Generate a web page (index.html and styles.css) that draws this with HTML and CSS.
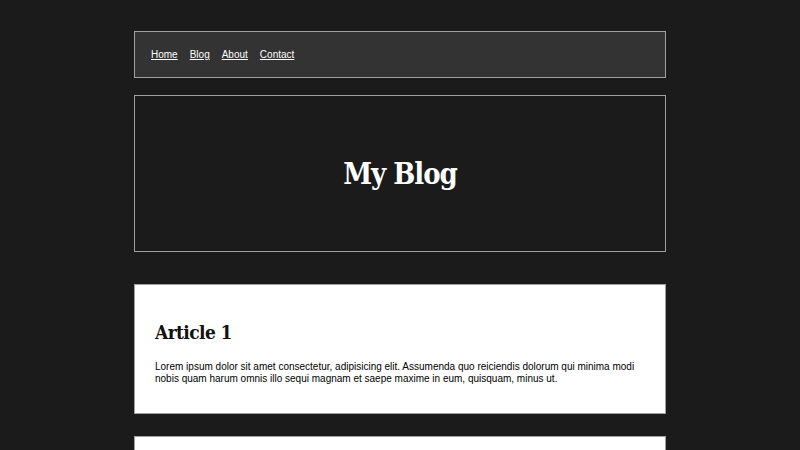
FILE: index.html
```html
<!DOCTYPE html>
<html>
<head>
<meta charset="utf-8">
<link rel="stylesheet" href="styles.css">
</head>
<body>
<div class="page">
  <nav class="nav">
    <a href="#">Home</a>
    <a href="#">Blog</a>
    <a href="#">About</a>
    <a href="#">Contact</a>
  </nav>
  <header class="hero">
    <h1>My Blog</h1>
  </header>
  <main class="articles">
    <article class="card">
      <h2>Article 1</h2>
      <p>Lorem ipsum dolor sit amet consectetur, adipisicing elit. Assumenda quo reiciendis dolorum qui minima modi nobis quam harum omnis illo sequi magnam et saepe maxime in eum, quisquam, minus ut.</p>
    </article>
    <article class="card">
      <h2>Article 2</h2>
      <p>Lorem ipsum dolor sit amet consectetur, adipisicing elit. Assumenda quo reiciendis dolorum qui minima modi nobis quam harum omnis illo sequi magnam et saepe maxime in eum, quisquam, minus ut.</p>
    </article>
  </main>
</div>
</body>
</html>
```
FILE: styles.css
```css
html, body {
  margin: 0;
  padding: 0;
  background: #1b1b1b;
  font-family: "Liberation Sans", Arial, sans-serif;
  font-size: 10px;
}
.page {
  width: 532px;
  margin: 0 auto;
  padding-top: 31px;
  display: flex;
  flex-direction: column;
}
.nav {
  box-sizing: border-box;
  height: 47px;
  background: #333333;
  border: 1px solid #a0a0a0;
  display: flex;
  align-items: center;
  gap: 12px;
  padding: 0 16px 0 16px;
  font-size: 10px;
}
.nav a {
  color: #ffffff;
}
.hero {
  box-sizing: border-box;
  margin-top: 17px;
  height: 157px;
  border: 1px solid #a0a0a0;
  display: flex;
  align-items: center;
  justify-content: center;
}
.hero h1 {
  margin: 0;
  color: #ffffff;
  font-family: "DejaVu Serif Condensed", "DejaVu Serif", serif;
  font-size: 29px;
  letter-spacing: -1px;
  font-weight: bold;
}
.articles {
  margin-top: 32px;
  display: flex;
  flex-direction: column;
  gap: 22px;
}
.card {
  box-sizing: border-box;
  height: 130px;
  background: #ffffff;
  border: 1px solid #a0a0a0;
  padding: 36px 20px 0 20px;
}
.card h2 {
  margin: 0 0 18px 0;
  font-family: "DejaVu Serif Condensed", "DejaVu Serif", serif;
  font-size: 19px;
  letter-spacing: -0.6px;
  font-weight: bold;
  color: #111;
}
.card p {
  margin: 0;
  font-size: 10px;
  line-height: 12px;
  color: #000;
}
```
